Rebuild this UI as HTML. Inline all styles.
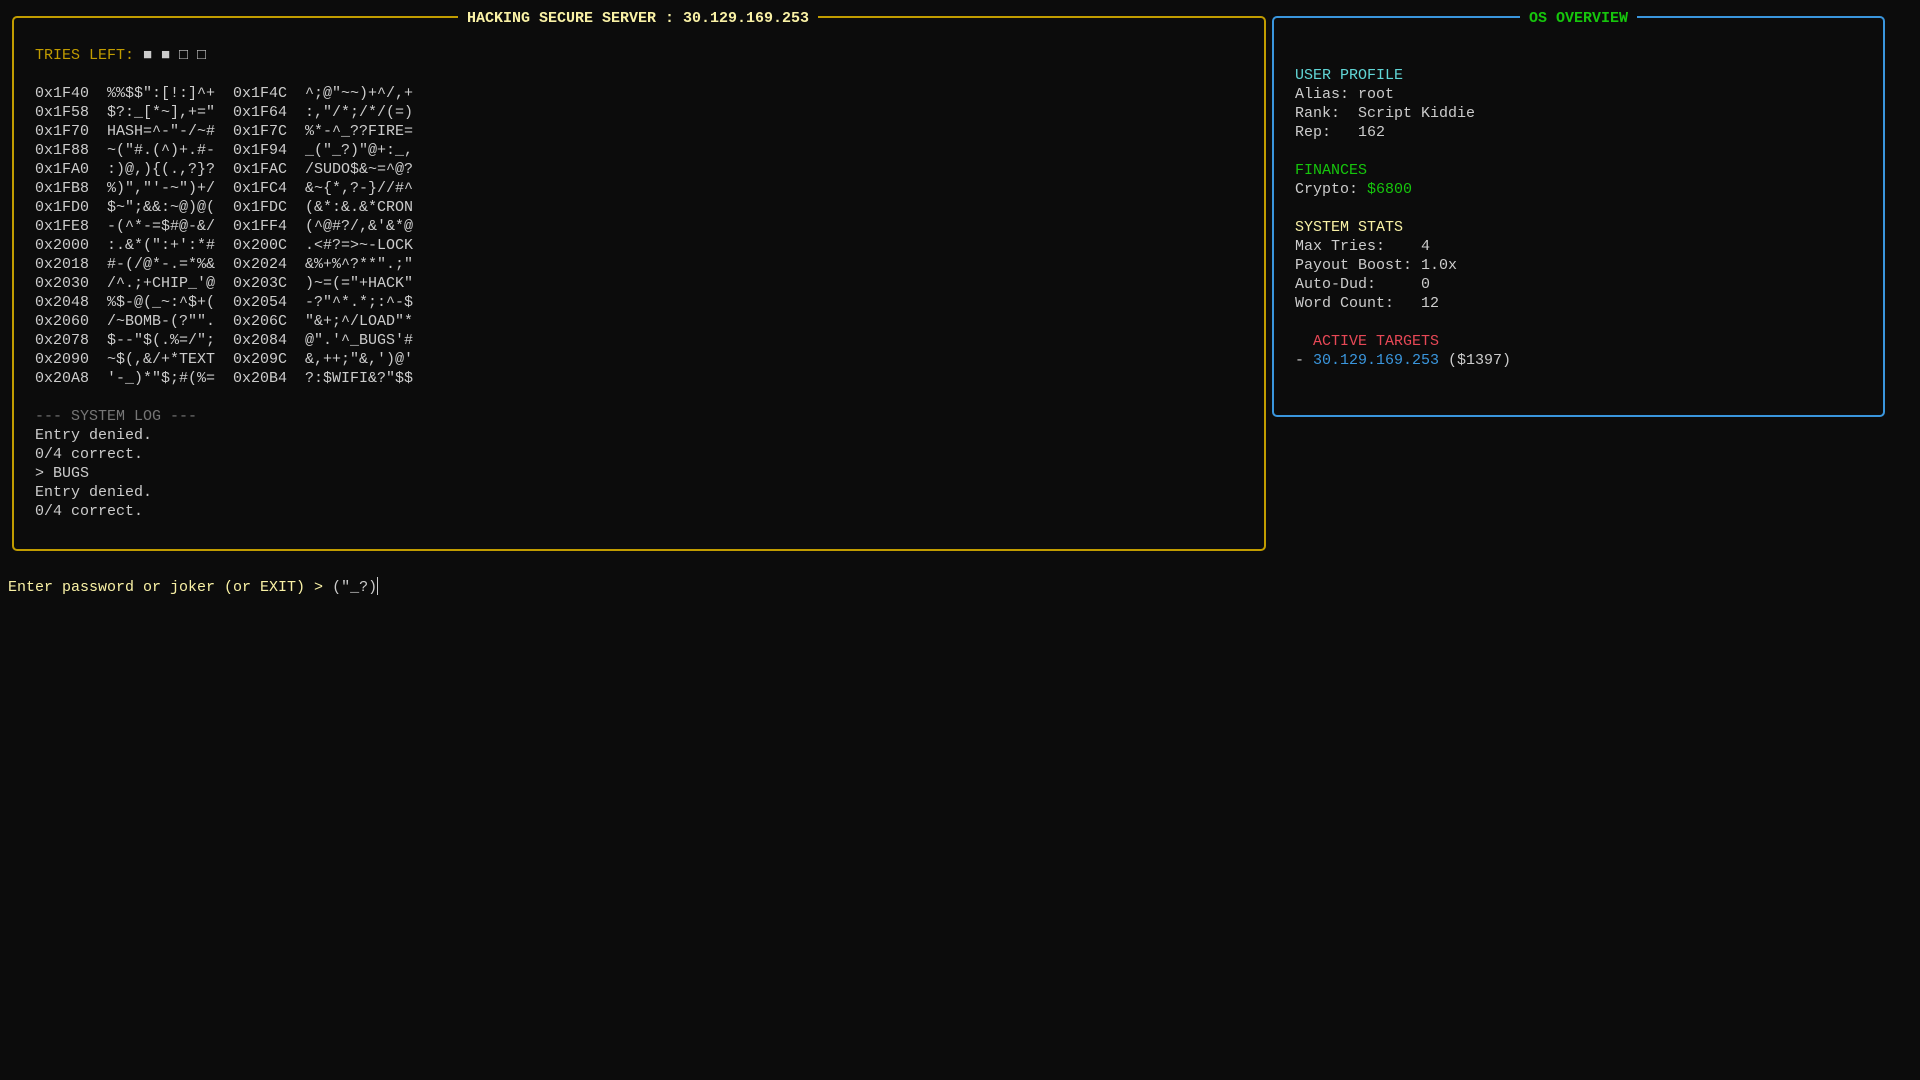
<!DOCTYPE html>
<html><head><meta charset="utf-8"><style>
html,body{margin:0;padding:0;background:#0c0c0c;width:1920px;height:1080px;overflow:hidden}
body{font-family:"Liberation Mono","DejaVu Sans Mono",monospace;font-size:15px;color:#cccccc;position:relative}
pre{margin:0;font:inherit;line-height:19px;position:absolute;white-space:pre}
.box{position:absolute;border-radius:5px}
.title{position:absolute;background:#0c0c0c;padding:0 9px;line-height:19px;font-weight:bold;white-space:pre}
.y{color:#c19c00}.ly{color:#f9f1a5}.c{color:#61d6d6}.g{color:#16c60c}.r{color:#e74856}.b{color:#3a96dd}.d{color:#767676}
</style></head><body>
<div class="box" style="left:12px;top:16px;width:1250px;height:531px;border:2px solid #c19c00"></div>
<div class="title ly" style="left:458px;top:8.5px">HACKING SECURE SERVER : 30.129.169.253</div>
<div class="box" style="left:1272px;top:16px;width:609px;height:397px;border:2px solid #3a96dd"></div>
<div class="title g" style="left:1520px;top:8.5px">OS OVERVIEW</div>
<pre style="left:35px;top:45.5px"><span class="y">TRIES LEFT:</span> ■ ■ □ □

0x1F40  %%$$":[!:]^+  0x1F4C  ^;@"~~)+^/,+
0x1F58  $?:_[*~],+="  0x1F64  :,"/*;/*/(=)
0x1F70  HASH=^-"-/~#  0x1F7C  %*-^_??FIRE=
0x1F88  ~("#.(^)+.#-  0x1F94  _("_?)"@+:_,
0x1FA0  :)@,){(.,?}?  0x1FAC  /SUDO$&~=^@?
0x1FB8  %)","'-~")+/  0x1FC4  &~{*,?-}//#^
0x1FD0  $~";&&:~@)@(  0x1FDC  (&*:&.&*CRON
0x1FE8  -(^*-=$#@-&/  0x1FF4  (^@#?/,&'&*@
0x2000  :.&*(":+':*#  0x200C  .<#?=>~-LOCK
0x2018  #-(/@*-.=*%&  0x2024  &%+%^?**".;"
0x2030  /^.;+CHIP_'@  0x203C  )~=(="+HACK"
0x2048  %$-@(_~:^$+(  0x2054  -?"^*.*;:^-$
0x2060  /~BOMB-(?"".  0x206C  "&+;^/LOAD"*
0x2078  $--"$(.%=/";  0x2084  @".'^_BUGS'#
0x2090  ~$(,&/+*TEXT  0x209C  &,++;"&,')@'
0x20A8  '-_)*"$;#(%=  0x20B4  ?:$WIFI&?"$$

<span class="d">--- SYSTEM LOG ---</span>
Entry denied.
0/4 correct.
&gt; BUGS
Entry denied.
0/4 correct.</pre>
<pre style="left:1295px;top:65.5px"><span class="c">USER PROFILE</span>
Alias: root
Rank:  Script Kiddie
Rep:   162

<span class="g">FINANCES</span>
Crypto: <span class="g">$6800</span>

<span class="ly">SYSTEM STATS</span>
Max Tries:    4
Payout Boost: 1.0x
Auto-Dud:     0
Word Count:   12

  <span class="r">ACTIVE TARGETS</span>
- <span class="b">30.129.169.253</span> ($1397)</pre>
<pre style="left:8px;top:577px"><span class="ly">Enter password or joker (or EXIT) &gt; </span>("_?)<span style="display:inline-block;width:1px;height:18px;background:#cccccc;vertical-align:-4px"></span></pre>
</body></html>
